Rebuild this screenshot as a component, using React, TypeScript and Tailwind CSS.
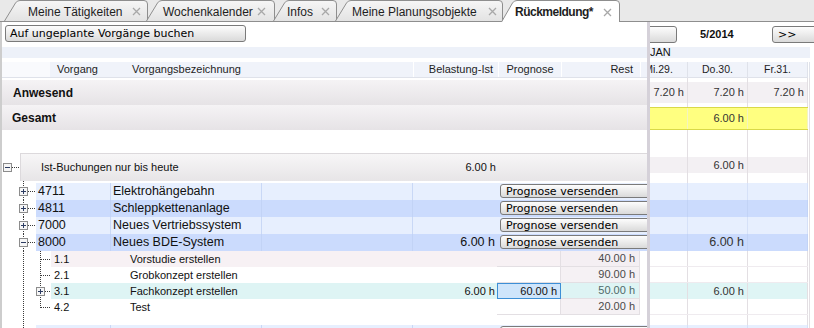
import React from "react";

const SANS = "font-['Liberation_Sans',Arial,Helvetica,sans-serif]";
const VERD = "font-['DejaVu_Sans',Verdana,sans-serif]";

const TABS = [
  { label: "Meine Tätigkeiten", w: 144, cls: "ml-[4px] w-[144px] pl-[24px] pr-[7px]" },
  { label: "Wochenkalender", w: 129, cls: "-ml-[2px] w-[129px] pl-[17px] pr-[9px]" },
  { label: "Infos", w: 64, cls: "-ml-[2px] w-[64px] pl-[14px] pr-[7px]" },
  { label: "Meine Planungsobjekte", w: 168, cls: "-ml-[2px] w-[168px] pl-[17px] pr-[6px]" },
  { label: "Rückmeldung*", w: 119, cls: "-ml-[2px] w-[119px] pl-[14px] pr-[8px]", active: true },
];

const DAYS = ["Mi.29.", "Do.30.", "Fr.31."];

function CloseX() {
  return (
    <svg width="9" height="9" viewBox="0 0 9 9" className="shrink-0">
      <path d="M1 1 L8 8 M8 1 L1 8" stroke="#a8a8a8" strokeWidth="1.3" />
    </svg>
  );
}

function Tab({ t, i }: { t: (typeof TABS)[number]; i: number }) {
  const h = t.active ? 22 : 21;
  const w = t.w;
  return (
    <div className={`relative flex shrink-0 items-center pt-[2px] ${t.cls} ${t.active ? "z-10 -mb-px h-[22px]" : "h-[21px]"}`}>
      <svg className="absolute left-0 top-0" width={w} height={h}>
        <defs>
          <linearGradient id={`tg${i}`} x1="0" y1="0" x2="0" y2="1">
            <stop offset="0" stopColor="#f6f6f6" />
            <stop offset="1" stopColor="#e3e3e3" />
          </linearGradient>
        </defs>
        <path
          d={`M0.5 ${h} L11.5 3 Q13 0.5 16 0.5 L${w - 4} 0.5 Q${w - 0.5} 0.5 ${w - 0.5} 4 L${w - 0.5} ${h}`}
          fill={t.active ? "#ffffff" : `url(#tg${i})`}
          stroke="#8e8e8e"
        />
      </svg>
      <span className={`relative whitespace-nowrap text-[12px] text-[#1e1e1e] ${SANS} ${t.active ? "font-bold tracking-[-0.5px]" : ""}`}>{t.label}</span>
      <span className="relative ml-auto">
        <CloseX />
      </span>
    </div>
  );
}

function Btn({ children, className = "" }: { children?: React.ReactNode; className?: string }) {
  return (
    <div className={`flex shrink-0 items-center whitespace-nowrap rounded-[3px] border border-[#7a7a7a] bg-linear-to-b from-[#fdfdfd] to-[#dadada] text-[11px] leading-none text-black ${VERD} ${className}`}>
      {children}
    </div>
  );
}

function Box({ x, y, open }: { x: number; y: number; open: boolean }) {
  return (
    <g>
      <rect x={x + 0.5} y={y + 0.5} width={8} height={8} fill="#f6f6f6" stroke="#8c8c8c" />
      <path d={`M${x + 2} ${y + 4.5} H${x + 7}`} stroke="#2c3c62" />
      {!open && <path d={`M${x + 4.5} ${y + 2} V${y + 7}`} stroke="#2c3c62" />}
    </g>
  );
}

const DOT = { stroke: "#3a3a3a", strokeDasharray: "1 1" };

function ProjectRow({ num, name, belast, dark, open }: { num?: string; name?: string; belast?: string; dark?: boolean; open?: boolean }) {
  const sep = dark ? "border-[#c2d3f6]" : "border-[#c9d8f6]";
  return (
    <div className={`flex h-[17px] shrink-0 text-[12.5px] text-[#111] ${SANS}`}>
      <svg width="34" height="17" className="shrink-0">
        <path d="M21.5 0V17" {...DOT} />
        {num && <path d="M26 8.5H34" {...DOT} />}
        {num && <Box x={17} y={4} open={!!open} />}
      </svg>
      <div className={`flex flex-1 ${dark ? "bg-[#cbdbfd]" : "bg-[#e7effe]"}`}>
        <div className={`flex w-[75px] items-center border-r pl-[2px] ${sep}`}>{num}</div>
        <div className={`flex w-[151px] items-center border-r pl-[2px] ${sep}`}>{name}</div>
        <div className={`w-[151px] border-r ${sep}`} />
        <div className="flex w-[84px] items-center justify-end pr-[2px]">{belast}</div>
        <div className="flex-1 overflow-hidden pl-[3px] pt-[1px]">
          <Btn className="h-[14px] w-[170px] pl-[5px]">Prognose versenden</Btn>
        </div>
      </div>
    </div>
  );
}

type Child = {
  num: string;
  name: string;
  belast?: string;
  rest: string;
  bg: string;
  restBg: string;
  restColor: string;
  input?: string;
  box?: boolean;
  last?: boolean;
};

const CHILDREN: Child[] = [
  { num: "1.1", name: "Vorstudie erstellen", rest: "40.00 h", bg: "bg-[#f7f1f4]", restBg: "bg-[#f4eff3]", restColor: "text-[#4a4a4a]" },
  { num: "2.1", name: "Grobkonzept erstellen", rest: "90.00 h", bg: "bg-white", restBg: "bg-[#f5f1f4]", restColor: "text-[#4a4a4a]" },
  { num: "3.1", name: "Fachkonzept erstellen", belast: "6.00 h", rest: "50.00 h", bg: "bg-[#def4f4]", restBg: "bg-[#def4f4]", restColor: "text-[#4f6a6a]", input: "60.00 h", box: true },
  { num: "4.2", name: "Test", rest: "20.00 h", bg: "bg-white", restBg: "bg-[#f5f1f4]", restColor: "text-[#4a4a4a]", last: true },
];

function ChildRow({ c }: { c: Child }) {
  return (
    <div className={`flex h-[16px] shrink-0 text-[11px] text-[#111] ${SANS}`}>
      <svg width="49" height="16" className="shrink-0">
        <path d="M21.5 0V16" {...DOT} />
        <path d={c.last ? "M38.5 0V9" : "M38.5 0V16"} {...DOT} />
        <path d={c.box ? "M43 8.5H49" : "M39 8.5H49"} {...DOT} />
        {c.box && <Box x={34} y={4} open={false} />}
      </svg>
      <div className={`flex w-[446px] ${c.bg}`}>
        <div className="flex w-[76px] items-center pl-[3px]">{c.num}</div>
        <div className="flex w-[286px] items-center pl-[3px]">{c.name}</div>
        <div className="flex w-[84px] items-center justify-end pr-[2px]">{c.belast}</div>
      </div>
      {c.input ? (
        <div className="flex w-[64px] items-center justify-end border border-[#3d8fd6] bg-[#cfe5fb] pr-[3px]">{c.input}</div>
      ) : (
        <div className={`w-[64px] border-b border-r border-[#e3dfe3] ${c.bg}`} />
      )}
      <div className={`flex w-[79px] items-center justify-end border-b border-r border-[#e3dfe3] pr-[4px] ${c.restBg} ${c.restColor}`}>{c.rest}</div>
      <div className="flex-1 bg-white" />
    </div>
  );
}

function RRow({ h, bg = "bg-white", vals = [], cls = "text-[11px]", sep = "border-[#e3dfe3]", extra = "" }: { h: string; bg?: string; vals?: (string | undefined)[]; cls?: string; sep?: string; extra?: string }) {
  return (
    <div className={`flex shrink-0 ${h}`}>
      <div className={`flex shrink-0 ${bg} ${extra} text-[#333] ${SANS} ${cls}`}>
        {DAYS.map((d, i) => (
          <div key={d} className={`flex w-[60px] shrink-0 items-center justify-end border-r pr-[3px] ${sep}`}>
            {vals[i]}
          </div>
        ))}
      </div>
      <div className="w-[2px] shrink-0 border-r border-[#e3dfe3]" />
    </div>
  );
}

export default function App() {
  return (
    <div className="h-[328px] w-[814px] overflow-hidden bg-white">
      {/* tab bar */}
      <div className="flex h-[22px] items-end border-b border-[#8e8e8e] bg-[#e9e9e9]">
        {TABS.map((t, i) => (
          <Tab key={t.label} t={t} i={i} />
        ))}
      </div>

      <div className="flex h-[306px]">
        {/* left panel */}
        <div className="flex w-[647px] shrink-0 flex-col overflow-hidden border-l-2 border-[#cdcdcd] bg-white">
          <div className="h-[24px] shrink-0 pl-[3px] pt-[3px]">
            <Btn className="h-[17px] w-[241px] pl-[4px]">Auf ungeplante Vorgänge buchen</Btn>
          </div>
          <div className="h-[14px] shrink-0 pt-[1px]">
            <div className="h-[11px] bg-[#edf1f9]" />
          </div>
          <div className={`flex h-[18px] shrink-0 border-b border-[#dfe2ea] pt-[2px] text-[11px] text-[#1e1e1e] ${SANS}`}>
            <div className="w-[48px] bg-[#f9fafd]" />
            <div className="flex w-[61px] items-center bg-[#f0f3fa] pl-[7px]">Vorgang</div>
            <div className="flex w-[151px] items-center justify-center bg-[#f0f3fa]">Vorgangsbezeichnung</div>
            <div className="w-[151px] bg-[#f0f3fa]" />
            <div className="flex w-[85px] items-center justify-end border-l border-white bg-[#f0f3fa] pr-[5px]">Belastung-Ist</div>
            <div className="flex w-[63px] items-center justify-center border-l border-white bg-[#f0f3fa]">Prognose</div>
            <div className="flex w-[79px] items-center justify-end border-l border-white bg-[#f0f3fa] pr-[7px]">Rest</div>
            <div className="flex-1 border-l border-white bg-[#f0f3fa]" />
          </div>
          <div className="h-[2px] shrink-0" />
          <div className={`flex h-[25px] shrink-0 items-center bg-linear-to-b from-[#f5f3f5] to-[#e6e3e6] pl-[11px] text-[12px] font-bold text-[#111] ${SANS}`}>Anwesend</div>
          <div className={`flex h-[25px] shrink-0 items-center bg-linear-to-b from-[#f5f3f5] to-[#e6e3e6] pl-[10px] text-[12px] font-bold text-[#111] ${SANS}`}>Gesamt</div>
          <div className="h-[23px] shrink-0" />
          <div className={`flex h-[28px] shrink-0 text-[11px] text-[#111] ${SANS}`}>
            <svg width="18" height="28" className="shrink-0">
              <path d="M10 14.5H18" {...DOT} />
              <Box x={1} y={10} open />
            </svg>
            <div className="flex flex-1 border-l border-t border-[#dcd9dc] bg-linear-to-b from-[#f7f6f7] to-[#e7e5e7]">
              <div className="flex w-[392px] items-center pl-[20px]">Ist-Buchungen nur bis heute</div>
              <div className="flex w-[84px] items-center justify-end pr-[1px]">6.00 h</div>
            </div>
          </div>
          <div className="flex h-[2px] shrink-0">
            <svg width="34" height="2">
              <path d="M21.5 0V2" {...DOT} />
            </svg>
          </div>
          <ProjectRow num="4711" name="Elektrohängebahn" />
          <ProjectRow num="4811" name="Schleppkettenanlage" dark />
          <ProjectRow num="7000" name="Neues Vertriebssystem" />
          <ProjectRow num="8000" name="Neues BDE-System" belast="6.00 h" dark open />
          {CHILDREN.map((c) => (
            <ChildRow key={c.num} c={c} />
          ))}
          <div className="flex h-[10px] shrink-0">
            <svg width="34" height="10">
              <path d="M21.5 0V10" {...DOT} />
            </svg>
          </div>
          <ProjectRow />
        </div>

        {/* splitter */}
        <div className="w-[3px] shrink-0 bg-[#d5d1d9]" />

        {/* right panel: calendar */}
        <div className="flex-1 overflow-hidden bg-white">
          <div className="-ml-[22px] flex w-[260px] flex-col">
            <div className="flex h-[24px] shrink-0 items-start pt-[4px]">
              <Btn className="h-[17px] w-[49px]" />
              <div className={`w-[95px] shrink-0 pl-[23px] pt-[3px] text-[11px] font-bold leading-none text-[#111] ${SANS}`}>5/2014</div>
              <Btn className="h-[17px] w-[50px] pl-[5px]">&gt;&gt;</Btn>
            </div>
            <div className="h-[14px] shrink-0 pt-[1px]">
              <div className={`h-[11px] w-[182px] bg-[#edf1f9] pl-[22px] text-[11px] leading-[11px] text-[#111] ${SANS}`}>JAN</div>
            </div>
            <div className={`flex h-[18px] shrink-0 pt-[2px] text-[10.5px] text-[#1e1e1e] ${SANS}`}>
              {DAYS.map((d, i) => (
                <div key={d} className={`flex w-[60px] shrink-0 items-center justify-center border-b border-r border-[#dfe2ea] bg-[#f0f3fa] ${i === 0 ? "pl-[2px]" : ""}`}>
                  {d}
                </div>
              ))}
              <div className="w-[2px] shrink-0 border-r border-[#dfe2ea]" />
            </div>
            <RRow h="h-[4px]" />
            <RRow h="h-[21px]" bg="bg-[#f3f0f3]" vals={["7.20 h", "7.20 h", "7.20 h"]} />
            <RRow h="h-[4px]" />
            <RRow h="h-[23px]" bg="bg-[#ffff80]" extra="border-y border-[#d9d948]" sep="border-[#f4f4c0]" vals={[undefined, "6.00 h"]} />
            <RRow h="h-[27px]" />
            <RRow h="h-[16px]" bg="bg-[#f3f0f3]" vals={[undefined, "6.00 h"]} />
            <RRow h="h-[10px]" />
            <RRow h="h-[17px]" bg="bg-[#e7effe]" sep="border-[#d6e1f8]" />
            <RRow h="h-[17px]" bg="bg-[#cbdbfd]" sep="border-[#c2d3f6]" />
            <RRow h="h-[17px]" bg="bg-[#e7effe]" sep="border-[#d6e1f8]" />
            <RRow h="h-[17px]" bg="bg-[#cbdbfd]" sep="border-[#c2d3f6]" cls="text-[12.5px] text-[#111]" vals={[undefined, "6.00 h"]} />
            <RRow h="h-[16px]" extra="border-b border-[#efebef]" />
            <RRow h="h-[16px]" extra="border-b border-[#efebef]" />
            <RRow h="h-[16px]" bg="bg-[#dff5f5]" vals={[undefined, "6.00 h"]} />
            <RRow h="h-[16px]" extra="border-b border-[#efebef]" />
            <RRow h="h-[10px]" />
            <RRow h="h-[17px]" bg="bg-[#e7effe]" sep="border-[#d6e1f8]" />
          </div>
        </div>
      </div>
    </div>
  );
}
